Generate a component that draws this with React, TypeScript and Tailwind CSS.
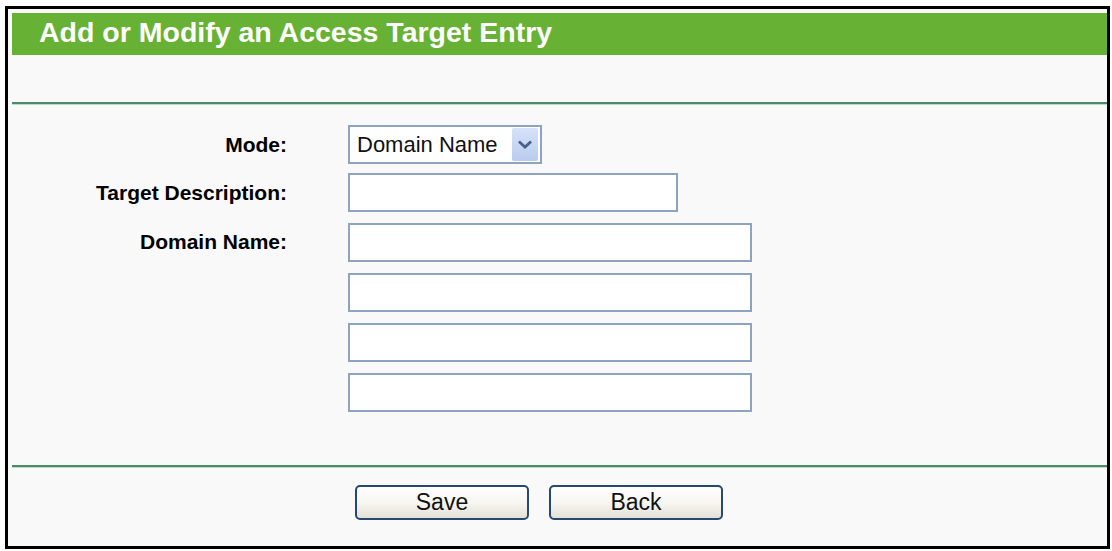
import { useState } from "react";

const font = { fontFamily: '"Liberation Sans", Arial, sans-serif' };

function TextBox({ width, value, onChange }: { width: string; value: string; onChange: (v: string) => void }) {
  return (
    <input
      type="text"
      value={value}
      onChange={(e) => onChange(e.target.value)}
      className={`${width} h-[39px] bg-white border-2 border-[#8ea3bf] px-2 text-[20px] text-black outline-none`}
    />
  );
}

export default function App() {
  const [desc, setDesc] = useState("");
  const [domains, setDomains] = useState(["", "", "", ""]);

  return (
    <div className="w-[1112px] h-[551px] bg-white pt-[6px] pl-[5px]" style={font}>
      <div className="w-[1105px] h-[543px] border-[3px] border-black bg-[#f9f9f9] flex flex-col">
        {/* Title bar */}
        <div className="ml-[4px] mt-[4px] h-[42px] bg-[#67b234] flex items-center pl-[27px] pb-[3px]">
          <h1 className="text-[28.5px] font-bold text-white leading-none">Add or Modify an Access Target Entry</h1>
        </div>

        <div className="h-[47px]" />
        <div className="ml-[4px] h-[2px] bg-[#4d8a6b] shadow-[0_1px_0_#b9dcc6]" />

        {/* Form */}
        <div className="mt-[21px] flex flex-col">
          <div className="flex items-center h-[39px]">
            <div className="w-[279px] text-right text-[21px] font-bold text-black">Mode:</div>
            <div className="ml-[61px] w-[194px] h-[39px] bg-white border-2 border-[#8ea3bf] flex items-center justify-between pl-[7px] pr-[2px]">
              <span className="text-[22px] text-[#111]">Domain Name</span>
              <div className="w-[26px] h-[33px] rounded-[2px] bg-gradient-to-b from-[#d6e2f8] to-[#b9cbee] flex items-center justify-center">
                <svg width="14" height="10" viewBox="0 0 14 10">
                  <path d="M2 2.5 L7 7 L12 2.5" fill="none" stroke="#4a5f86" strokeWidth="2.8" strokeLinecap="square" />
                </svg>
              </div>
            </div>
          </div>

          <div className="mt-[9px] flex items-center h-[39px]">
            <div className="w-[279px] text-right text-[21px] font-bold text-black">Target Description:</div>
            <div className="ml-[61px]">
              <TextBox width="w-[330px]" value={desc} onChange={setDesc} />
            </div>
          </div>

          <div className="mt-[11px] flex items-start">
            <div className="w-[279px] h-[37px] flex items-center justify-end text-[21px] font-bold text-black">Domain Name:</div>
            <div className="ml-[61px] flex flex-col gap-[11px]">
              {domains.map((d, i) => (
                <TextBox
                  key={i}
                  width="w-[404px]"
                  value={d}
                  onChange={(v) => setDomains((prev) => prev.map((x, j) => (j === i ? v : x)))}
                />
              ))}
            </div>
          </div>
        </div>

        <div className="mt-[53px] ml-[4px] h-[2px] bg-[#4d8a6b] shadow-[0_1px_0_#b9dcc6]" />

        {/* Buttons */}
        <div className="mt-[18px] flex gap-[20px] pl-[347px]">
          {["Save", "Back"].map((label) => (
            <button
              key={label}
              className="w-[174px] h-[35px] rounded-[5px] border-2 border-[#264872] bg-gradient-to-b from-white via-[#f7f6f1] to-[#e3e1d7] text-[23px] text-[#111] leading-none"
            >
              {label}
            </button>
          ))}
        </div>
      </div>
    </div>
  );
}
